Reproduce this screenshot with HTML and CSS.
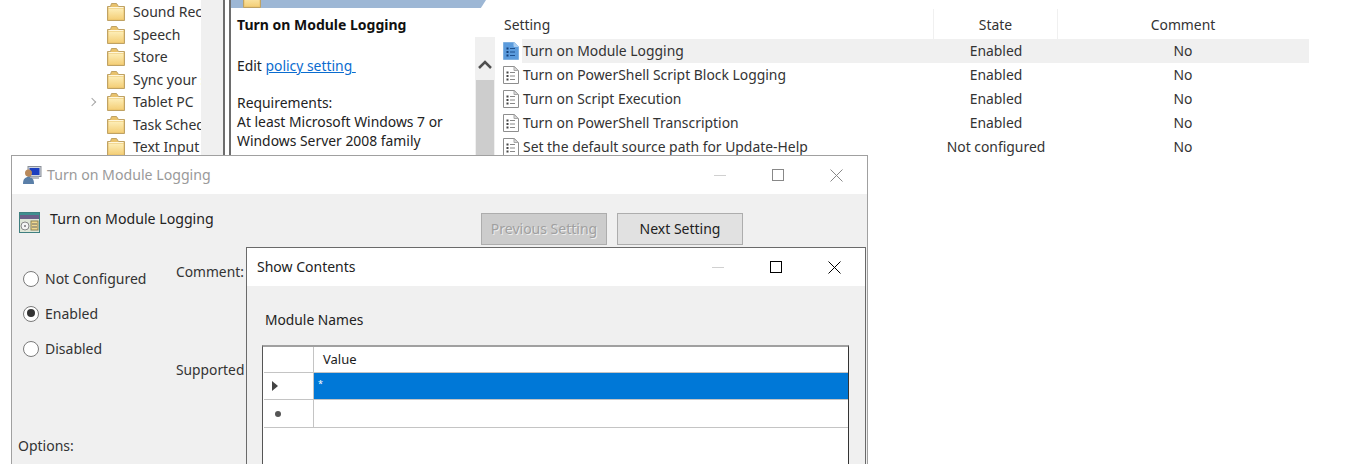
FILE: index.html
```html
<!DOCTYPE html>
<html>

	<head>
		<meta charset="utf-8">
		<title>Turn on Module Logging</title>
		<link rel="stylesheet" href="styles.css">
	</head>

	<body>
		<svg class="defs" width="0" height="0">
			<defs>
				<linearGradient id="folder_fill" x1="0" y1="0" x2="0" y2="1">
					<stop offset="0" stop-color="#fdeeb8"/>
					<stop offset="1" stop-color="#f4cf78"/>
				</linearGradient>
			</defs>
			<symbol id="folder" viewBox="0 0 18 18">
				<path d="M.5 3.500v14h17v-14h-6l-2-3h-5l-1 3z" fill="#e9c26c" stroke="#bfa264"/>
				<path d="M1.500 5.500h15v11h-15z" fill="url(#folder_fill)"/>
				<path d="M1.500 4.500h15" stroke="#fff7dc"/>
			</symbol>
			<symbol id="doc" viewBox="0 0 16 18">
				<path d="M.5 .5h11l4 4v13h-15z" fill="#fff" stroke="#8e8e8e"/>
				<path d="M11 .5v4h4.500z" fill="#dcdcdc" stroke="#a8a8a8"/>
				<path d="M3.500 5.500h2v2h-2zM3.500 9h2v2h-2zM3.500 12.500h2v2h-2z" fill="#444"/>
				<path d="M7 6.500h5M7 10h5M7 13.500h5" stroke="#888"/>
			</symbol>
			<symbol id="doc-sel" viewBox="0 0 16 18">
				<path d="M.5 .5h11l4 4v13h-15z" fill="#5b9bdc" stroke="#7fb0e0"/>
				<path d="M11 .5v4h4.500z" fill="#a9cdf0" stroke="#a9cdf0"/>
				<path d="M3.500 5.500h2v2h-2zM3.500 9h2v2h-2zM3.500 12.500h2v2h-2z" fill="#123f78"/>
				<path d="M7 6.500h5M7 10h5M7 13.500h5" stroke="#1d4f8c"/>
			</symbol>
		</svg>

		<div class="page">
			<div class="explorer">
				<ul class="tree">
					<li><svg class="folder"><use href="#folder"/></svg><span>Sound Recorder</span></li>
					<li><svg class="folder"><use href="#folder"/></svg><span>Speech</span></li>
					<li><svg class="folder"><use href="#folder"/></svg><span>Store</span></li>
					<li><svg class="folder"><use href="#folder"/></svg><span>Sync your settings</span></li>
					<li class="has_kids"><svg class="folder"><use href="#folder"/></svg><span>Tablet PC</span></li>
					<li><svg class="folder"><use href="#folder"/></svg><span>Task Scheduler</span></li>
					<li><svg class="folder"><use href="#folder"/></svg><span>Text Input</span></li>
				</ul>
				<div class="tree_bar"></div>
				<div class="splitter"></div>

				<div class="detail">
					<div class="banner"><svg class="folder"><use href="#folder"/></svg></div>
					<div class="detail_main">
						<div class="detail_text">
							<h1>Turn on Module Logging</h1>
							<p class="edit">Edit <a href="#">policy setting </a></p>
							<p class="req">Requirements:<br>At least Microsoft Windows 7 or Windows Server 2008 family</p>
						</div>
						<div class="scroll">
							<div class="scroll_up"><svg width="16" height="10" viewBox="0 0 16 10"><path d="M2 8l6-6 6 6" fill="none" stroke="#505050" stroke-width="2.500"/></svg></div>
							<div class="scroll_thumb"></div>
						</div>
					</div>
				</div>

				<div class="list">
					<div class="row head_row">
						<div class="c_name">Setting</div>
						<div class="c_state">State</div>
						<div class="c_comment">Comment</div>
					</div>
					<div class="row selected">
						<svg class="doc"><use href="#doc-sel"/></svg>
						<div class="c_name">Turn on Module Logging</div>
						<div class="c_state">Enabled</div>
						<div class="c_comment">No</div>
					</div>
					<div class="row">
						<svg class="doc"><use href="#doc"/></svg>
						<div class="c_name">Turn on PowerShell Script Block Logging</div>
						<div class="c_state">Enabled</div>
						<div class="c_comment">No</div>
					</div>
					<div class="row">
						<svg class="doc"><use href="#doc"/></svg>
						<div class="c_name">Turn on Script Execution</div>
						<div class="c_state">Enabled</div>
						<div class="c_comment">No</div>
					</div>
					<div class="row">
						<svg class="doc"><use href="#doc"/></svg>
						<div class="c_name">Turn on PowerShell Transcription</div>
						<div class="c_state">Enabled</div>
						<div class="c_comment">No</div>
					</div>
					<div class="row">
						<svg class="doc"><use href="#doc"/></svg>
						<div class="c_name">Set the default source path for Update-Help</div>
						<div class="c_state">Not configured</div>
						<div class="c_comment">No</div>
					</div>
				</div>
			</div>

			<!-- policy dialog -->
			<div class="win win_back">
				<div class="titlebar">
					<svg class="title_icon" width="20" height="20" viewBox="0 0 20 20">
						<rect x="6" y="1.500" width="13" height="10" fill="#cfd6e0" stroke="#8a8f98"/>
						<rect x="7.500" y="3" width="10" height="7" fill="#1c3fc0"/>
						<path d="M9 11.500h8v2.500h-8z" fill="#b5b9c0"/>
						<circle cx="6.500" cy="8" r="3.500" fill="#b98a5c"/>
						<path d="M1 19c0-5 2-7 5.500-7s5.500 2 5.500 7z" fill="#5a7fa8"/>
					</svg>
					<span class="title_text">Turn on Module Logging</span>
					<div class="controls">
						<i class="ctl_min"></i>
						<i class="ctl_max"></i>
						<svg class="ctl_close" width="13" height="13" viewBox="0 0 13 13"><path d="M.5 .5l12 12M12.500 .5l-12 12" stroke="currentColor" fill="none"/></svg>
					</div>
				</div>
				<div class="win_body">
					<div class="policy_head">
						<svg class="policy_icon" width="21" height="21" viewBox="0 0 21 21">
							<rect x=".5" y=".5" width="20" height="20" fill="#dfe6d8" stroke="#3f7f80"/>
							<rect x="1" y="1" width="19" height="2" fill="#3f8f90"/>
							<rect x="1" y="3" width="19" height="4" fill="#6a5f88"/>
							<circle cx="6" cy="14" r="4" fill="#f4f4f4" stroke="#888"/>
							<circle cx="6" cy="14" r="1" fill="#777"/>
							<rect x="12" y="9" width="7" height="9" fill="#f0d890" stroke="#8a7f50"/>
							<path d="M13 12h5M13 15h5" stroke="#666"/>
						</svg>
						<span class="policy_name">Turn on Module Logging</span>
						<div class="nav_btns">
							<button class="btn btn_off">Previous Setting</button>
							<button class="btn">Next Setting</button>
						</div>
					</div>
					<div class="policy_form">
						<div class="left_col">
							<label class="radio"><i></i>Not Configured</label>
							<label class="radio on"><i></i>Enabled</label>
							<label class="radio"><i></i>Disabled</label>
							<div class="options">Options:</div>
						</div>
						<div class="right_col">
							<div>Comment:</div>
							<div class="supported">Supported on:</div>
						</div>
					</div>
				</div>
			</div>

			<!-- show contents dialog -->
			<div class="win win_front">
				<div class="titlebar">
					<span class="title_text">Show Contents</span>
					<div class="controls">
						<i class="ctl_min"></i>
						<i class="ctl_max"></i>
						<svg class="ctl_close" width="13" height="13" viewBox="0 0 13 13"><path d="M.5 .5l12 12M12.500 .5l-12 12" stroke="currentColor" fill="none"/></svg>
					</div>
				</div>
				<div class="win_body">
					<div class="grid_label">Module Names</div>
					<div class="grid">
						<div class="g_corner"></div>
						<div class="g_head">Value</div>
						<div class="g_rowhead"><i class="arrow"></i></div>
						<div class="g_cell active">*</div>
						<div class="g_rowhead"><i class="dot"></i></div>
						<div class="g_cell"></div>
					</div>
				</div>
			</div>
		</div>
	</body>

</html>
```

FILE: styles.css
```css
* {
	margin: 0;
	padding: 0;
	list-style: none;
	box-sizing: border-box;
}

body {
	background: #fff;
	color: #1a1a1a;
	font-family: "Noto Sans", "Open Sans", sans-serif;
	font-size: 14px;
	line-height: 20px;
}

.defs {
	position: absolute;
}

.page {
	position: relative;
	width: 1372px;
	height: 464px;
	overflow: hidden;
}

.explorer {
	display: flex;
	height: 464px;
}

/* tree */
.tree {
	width: 201px;
	flex: none;
	padding: 1px 0 0 107px;
	overflow: hidden;
}

.tree li {
	position: relative;
	display: flex;
	align-items: center;
	gap: 8px;
	height: 22.500px;
	white-space: nowrap;
}

.tree span {
	color: #333;
}

.folder {
	width: 18px;
	height: 18px;
	flex: none;
}

.has_kids::before {
	content: "";
	position: absolute;
	left: -18px;
	top: 8px;
	width: 5px;
	height: 5px;
	border-top: 1px solid #a6a6a6;
	border-right: 1px solid #a6a6a6;
	transform: rotate(45deg);
}

.tree_bar {
	width: 22px;
	flex: none;
	background: #f0f0f0;
}

.splitter {
	width: 8px;
	flex: none;
	border-left: 2px solid #6d6d6d;
	border-right: 2px solid #6d6d6d;
}

/* middle pane */
.detail {
	width: 265px;
	flex: none;
}

.banner {
	height: 8px;
	width: 255px;
	overflow: hidden;
	padding-left: 12px;
	background: #9db7d5;
	clip-path: polygon(0 0, 100% 0, 98% 100%, 0 100%);
}

.banner .folder {
	display: block;
	margin-top: -10px;
}

.detail_main {
	display: flex;
}

.detail_text {
	width: 244px;
	flex: none;
	padding: 7px 0 0 6px;
	font-size: 13.900px;
	line-height: 19px;
	color: #222;
}

.detail_text h1 {
	font-size: 14px;
	font-weight: 700;
	line-height: 20px;
	color: #111;
}

.edit {
	margin-top: 21px;
}

.edit a {
	color: #0a6ccf;
	white-space: pre;
}

.req {
	margin-top: 18px;
}

.scroll {
	width: 20px;
	margin-top: 29px;
	background: #f0f0f0;
	height: 427px;
}

.scroll_up {
	display: flex;
	justify-content: center;
	align-items: center;
	height: 43px;
	padding-top: 13px;
}

.scroll_thumb {
	height: 300px;
	margin: 0 1px;
	background: #cdcdcd;
}

/* settings list */
.list {
	width: 813px;
	flex: none;
	padding-top: 9px;
	font-size: 13.900px;
}

.row {
	position: relative;
	display: flex;
	align-items: center;
	height: 23.900px;
	margin-left: 26px;
	color: #333;
}

.head_row {
	align-items: stretch;
	height: 30px;
	margin-left: 8px;
	line-height: 32px;
}

.selected {
	background: #f0f0f0;
}

.doc {
	position: absolute;
	left: -19px;
	top: 3px;
	width: 16px;
	height: 18px;
}

.c_name {
	flex: none;
	width: 412px;
	padding-left: 1px;
	white-space: nowrap;
}

.head_row .c_name {
	width: 430px;
	padding-left: 0;
	border-right: 1px solid #f0f0f0;
}

.c_state {
	flex: none;
	width: 124px;
	text-align: center;
	white-space: nowrap;
}

.head_row .c_state {
	border-right: 1px solid #f0f0f0;
}

.c_comment {
	flex: none;
	width: 250px;
	text-align: center;
}

/* dialogs */
.win {
	position: absolute;
	height: 340px;
	background: #f0f0f0;
	border: 1px solid #a0a0a0;
}

.win_back {
	left: 11px;
	top: 155px;
	width: 857px;
}

.win_front {
	left: 246px;
	top: 247px;
	width: 620px;
	border-color: #6a6a6a;
}

.titlebar {
	display: flex;
	align-items: center;
	height: 38px;
	background: #fff;
}

.title_icon {
	margin-left: 10px;
	flex: none;
}

.title_text {
	margin-left: 5px;
	font-size: 14.150px;
	color: #9a9a9a;
}

.win_front .title_text {
	margin-left: 10px;
	font-size: 14px;
	color: #222;
}

.controls {
	position: absolute;
	top: 0;
	right: 24px;
	display: flex;
	align-items: center;
	height: 38px;
	color: #888;
}

.win_front .controls {
	right: 24px;
	color: #000;
}

.ctl_min {
	width: 12px;
	height: 1px;
	background: #d0d0d0;
}

.ctl_max {
	width: 12px;
	height: 12px;
	margin: 0 46px;
	border: 1px solid currentColor;
}

.ctl_close {
	display: block;
}

.policy_head {
	display: flex;
	align-items: center;
	height: 51px;
	padding: 19px 124px 0 7px;
}

.policy_icon {
	flex: none;
	margin-top: -14px;
}

.policy_name {
	margin: -21px 0 0 10px;
	font-size: 14.150px;
	color: #222;
}

.nav_btns {
	display: flex;
	gap: 10px;
	margin-left: auto;
}

.btn {
	width: 126px;
	height: 32px;
	border: 1px solid #adadad;
	background: #e1e1e1;
	color: #222;
	font: inherit;
}

.btn_off {
	background: #cccccc;
	color: #a0a0a0;
	text-shadow: 1px 1px 0 #eee;
}

.policy_form {
	display: flex;
	padding: 17px 0 0 6px;
}

.left_col {
	width: 158px;
	flex: none;
}

.radio {
	position: relative;
	top: -1px;
	display: flex;
	align-items: center;
	gap: 6px;
	height: 35px;
	margin-left: 5px;
	color: #333;
}

.radio i {
	position: relative;
	width: 16px;
	height: 16px;
	border: 1.500px solid #7a7a7a;
	border-radius: 50%;
	background: #fff;
}

.radio.on i::after {
	content: "";
	position: absolute;
	left: 2.500px;
	top: 2.500px;
	width: 8px;
	height: 8px;
	border-radius: 50%;
	background: #333;
}

.options {
	margin-top: 69px;
	color: #333;
}

.right_col {
	font-size: 13.800px;
	color: #333;
	white-space: nowrap;
}

.supported {
	margin-top: 78px;
}

.grid_label {
	margin: 24px 0 15px 18px;
	font-size: 13.800px;
	color: #222;
}

.grid {
	display: grid;
	grid-template-columns: 50px 534px;
	grid-template-rows: 26px 27px 28px;
	align-content: start;
	width: 587px;
	height: 130px;
	margin-left: 15px;
	padding-left: 1px;
	background: #fff;
	border-top: 2px solid #a0a0a0;
	border-left: 1px solid #555;
	border-right: 1px solid #333;
}

.g_corner,
.g_rowhead {
	display: flex;
	align-items: center;
	padding-left: 8px;
	border-right: 1px solid #c4c4c4;
	border-bottom: 1px solid #c4c4c4;
}

.g_head {
	padding-left: 9px;
	line-height: 24px;
	font-size: 13px;
	border-bottom: 1px solid #c4c4c4;
}

.g_cell {
	border-bottom: 1px solid #c4c4c4;
}

.g_cell.active {
	padding-left: 4px;
	background: #0078d7;
	color: #fff;
	font-size: 9px;
	line-height: 22px;
}

.arrow {
	width: 0;
	height: 0;
	border-top: 5px solid transparent;
	border-bottom: 5px solid transparent;
	border-left: 6px solid #444;
}

.dot {
	width: 6px;
	height: 6px;
	margin-left: 3px;
	border-radius: 50%;
	background: #555;
}
```
